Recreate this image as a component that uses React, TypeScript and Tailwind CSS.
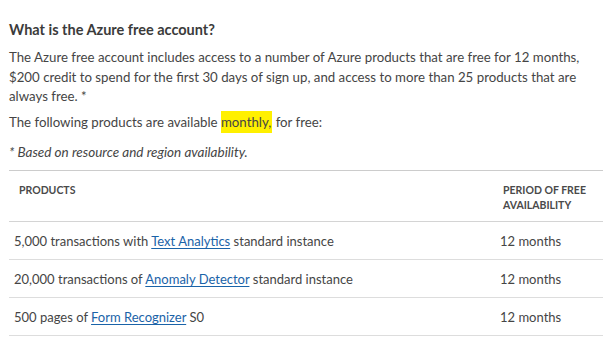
import React from 'react'

const rows = [
  { pre: '5,000 transactions with ', link: 'Text Analytics', post: ' standard instance', period: '12 months' },
  { pre: '20,000 transactions of ', link: 'Anomaly Detector', post: ' standard instance', period: '12 months' },
  { pre: '500 pages of ', link: 'Form Recognizer', post: ' S0', period: '12 months' },
]

export default function App() {
  return (
    <div className="min-h-screen bg-white text-[#454545] font-['Lato',sans-serif]">
      <div className="pl-[9px] pr-1 pt-[20px] w-[606px]">
        {/* Heading */}
        <h2 className="text-[14.5px] leading-5 font-bold text-[#3b3b3b]">What is the Azure free account?</h2>

        <p className="mt-[8px] text-[13.25px] leading-[19.5px]">
          The Azure free account includes access to a number of Azure products that are free for 12 months,
          <br />
          $200 credit to spend for the first 30 days of sign up, and access to more than 25 products that are
          <br />
          always free. *
        </p>

        <p className="mt-[5px] text-[13.25px] leading-5">
          The following products are available{' '}
          <span className="bg-[#fff000] py-[3px] pr-[1px]">monthly,</span> for free:
        </p>

        <p className="mt-[10px] text-[13.5px] leading-5 italic">* Based on resource and region availability.</p>

        {/* Table */}
        <div className="mt-[8px] w-[594px] border-t border-[#cccccc]">
          <div className="flex h-[51px] border-b border-[#d4d4d4] pt-[12px] text-[10.5px] leading-[15px] font-bold text-[#4a4a4a]">
            <div className="w-[494px] pl-[10px]">PRODUCTS</div>
            <div className="flex-1">
              PERIOD OF FREE
              <br />
              AVAILABILITY
            </div>
          </div>
          {rows.map((r) => (
            <div key={r.link} className="flex h-[38px] items-center border-b border-[#dddddd] pt-[4px] text-[13px]">
              <div className="w-[491px] pl-[5px]">
                {r.pre}
                <a className="text-[#1a63a8] underline underline-offset-2">{r.link}</a>
                {r.post}
              </div>
              <div className="flex-1">{r.period}</div>
            </div>
          ))}
        </div>
      </div>
    </div>
  )
}
